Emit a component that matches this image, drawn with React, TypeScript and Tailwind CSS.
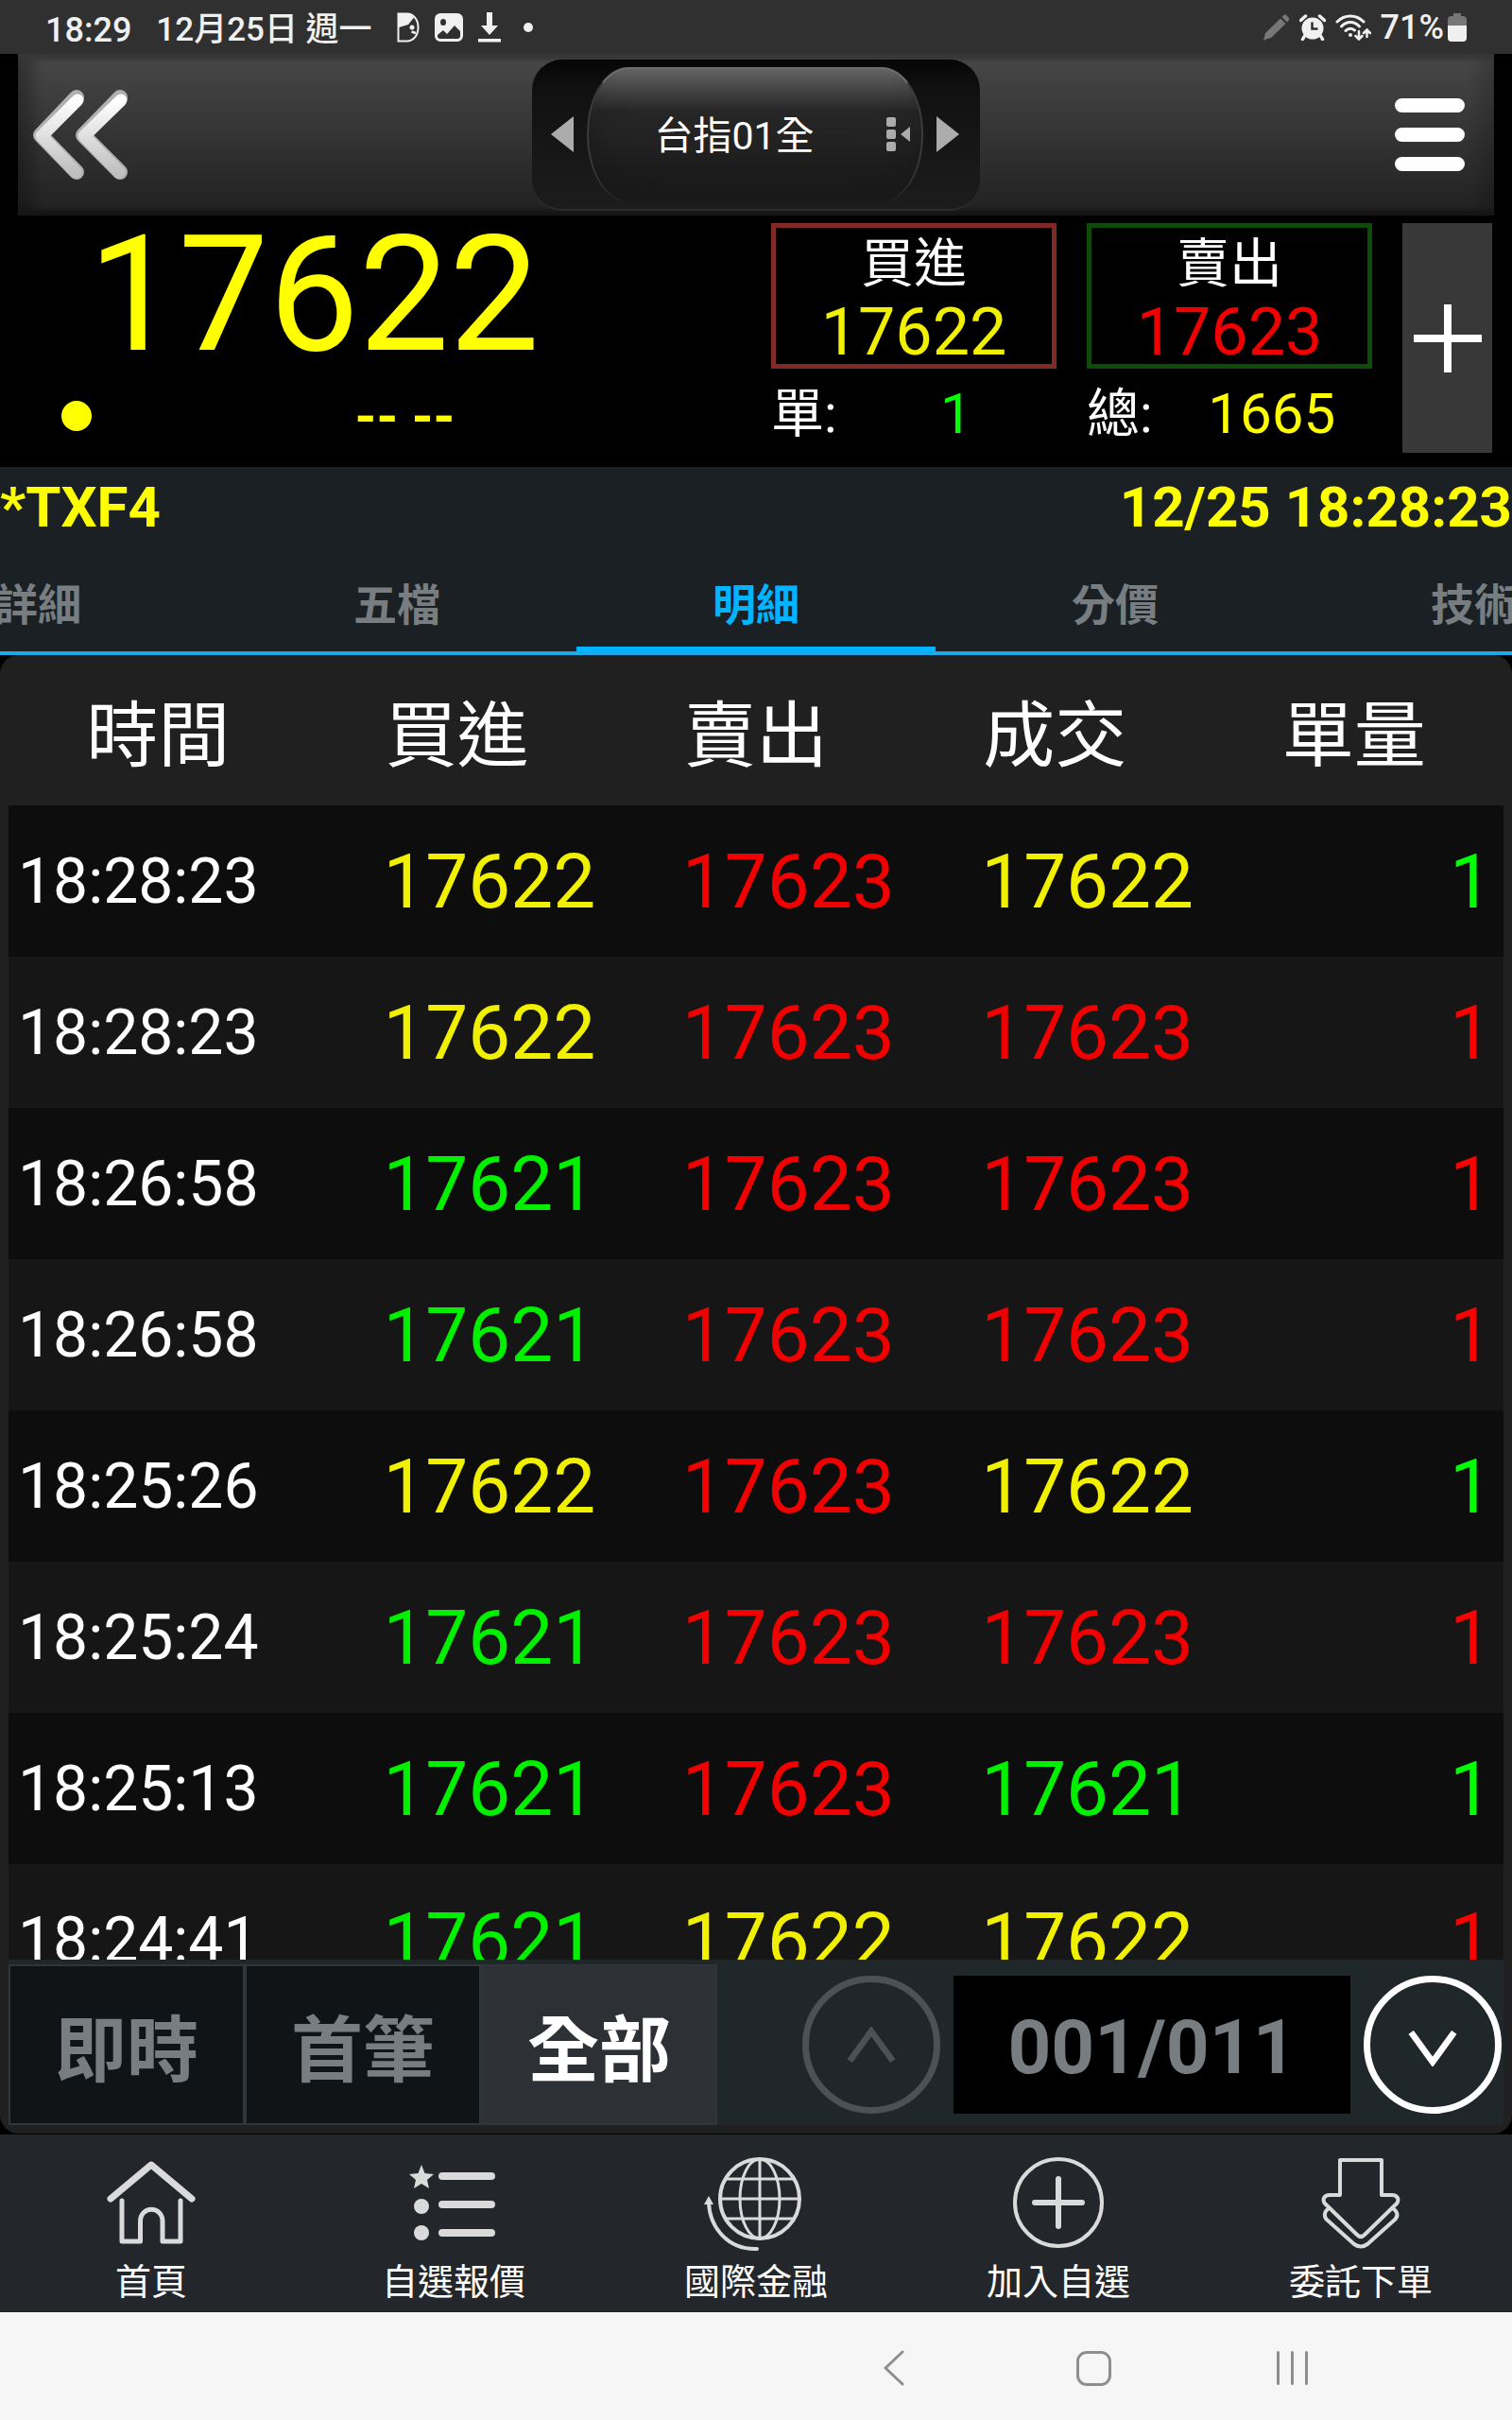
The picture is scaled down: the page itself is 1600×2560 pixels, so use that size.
import React from 'react';
import clsx from 'clsx';

type Tone = 'up' | 'down' | 'flat';

interface Tick {
  time: string;
  bid: [string, Tone];
  ask: [string, Tone];
  deal: [string, Tone];
  volume: [string, Tone];
}

const PRICE_TONE: Record<Tone, string> = {
  up: 'text-[#f00000]',
  down: 'text-[#00f000]',
  flat: 'text-[#f0f000]',
};

const VOLUME_TONE: Record<Tone, string> = {
  up: 'text-[#ff0000]',
  down: 'text-[#00ff00]',
  flat: 'text-[#ffff00]',
};

const TICKS: Tick[] = [
  { time: '18:28:23', bid: ['17622', 'flat'], ask: ['17623', 'up'], deal: ['17622', 'flat'], volume: ['1', 'down'] },
  { time: '18:28:23', bid: ['17622', 'flat'], ask: ['17623', 'up'], deal: ['17623', 'up'], volume: ['1', 'up'] },
  { time: '18:26:58', bid: ['17621', 'down'], ask: ['17623', 'up'], deal: ['17623', 'up'], volume: ['1', 'up'] },
  { time: '18:26:58', bid: ['17621', 'down'], ask: ['17623', 'up'], deal: ['17623', 'up'], volume: ['1', 'up'] },
  { time: '18:25:26', bid: ['17622', 'flat'], ask: ['17623', 'up'], deal: ['17622', 'flat'], volume: ['1', 'down'] },
  { time: '18:25:24', bid: ['17621', 'down'], ask: ['17623', 'up'], deal: ['17623', 'up'], volume: ['1', 'up'] },
  { time: '18:25:13', bid: ['17621', 'down'], ask: ['17623', 'up'], deal: ['17621', 'down'], volume: ['1', 'down'] },
  { time: '18:24:41', bid: ['17621', 'down'], ask: ['17622', 'flat'], deal: ['17622', 'flat'], volume: ['1', 'up'] },
];

const TABS = ['詳細', '五檔', '明細', '分價', '技術'];
const COLUMNS = ['時間', '買進', '賣出', '成交', '單量'];
const FILTERS = ['即時', '首筆', '全部'];

const StatusBar: React.FC = () => (
  <div className="flex h-[57px] shrink-0 items-center justify-between bg-[#303030] px-12 text-[#f0f0f0]">
    <div className="flex items-center">
      <span className="pt-1.5 text-[36px] leading-[48px] font-medium">18:29</span>
      <span className="ml-[26px] pt-1.5 text-[35px] leading-[48px] font-medium">12月25日 週一</span>
      <svg className="ml-[26px] h-8 w-6" viewBox="0 0 24 32">
        <path d="M1.500 1.500h9c7 0 12 6 12 14.500s-5 14.500-12 14.500h-9z" fill="none" stroke="#f0f0f0" strokeWidth="2" />
        <path d="M1 1h11c3 .500 5 2 6.500 4L12 13 2 16z" fill="#f0f0f0" />
        <circle cx="16" cy="16" r="2.500" fill="#f0f0f0" />
        <path d="M15.500 20.500l4.500 1.500" fill="none" stroke="#f0f0f0" strokeWidth="2.500" />
      </svg>
      <svg className="ml-4 h-[30px] w-[30px]" viewBox="0 0 30 30">
        <path
          fillRule="evenodd"
          fill="#f0f0f0"
          d="M6 0h18a6 6 0 0 1 6 6v18a6 6 0 0 1-6 6H6a6 6 0 0 1-6-6V6a6 6 0 0 1 6-6zM9 6a3 3.500 0 1 0 0 7 3 3.500 0 1 0 0-7zM3 23v1a3 3 0 0 0 3 3h18a3 3 0 0 0 3-3v-5l-6-6-8 9-4-4z"
        />
      </svg>
      <svg className="ml-4 h-8 w-6" viewBox="0 0 24 32">
        <path d="M9 0h6v14h6l-9 10-9-10h6zM0 28h24v3.500H0z" fill="#f0f0f0" />
      </svg>
      <span className="ml-6 h-[10px] w-[10px] rounded-full bg-[#f0f0f0]" />
    </div>
    <div className="flex items-center">
      <svg className="h-7 w-7" viewBox="0 0 28 28" fill="#777777">
        <path d="M0 28l2-8L18 4.500l5.500 5.500L8 25l-5 1.500zM19.500 3L22 .500c1-1 5 3 5.500 5L25 8.500z" />
      </svg>
      <svg className="ml-[10px] h-7 w-7" viewBox="0 0 28 28">
        <circle cx="14" cy="15" r="11.500" fill="#f0f0f0" />
        <path d="M1.500 6.500l5-4.500M26.500 6.500l-5-4.500M5.500 23l-2 3.500M22.500 23l2 3.500" stroke="#f0f0f0" strokeWidth="3.500" strokeLinecap="round" />
        <path d="M13.500 8.500v7h6" fill="none" stroke="#303030" strokeWidth="2.500" />
      </svg>
      <svg className="ml-[10px] h-7 w-[38px]" viewBox="0 0 38 28" fill="none" stroke="#f0f0f0" strokeWidth="3" strokeLinecap="round">
        <path d="M2 8c8-8 20-8 28 0M6.500 13c5.500-6 13.500-6 19 0M11 17.500c3-3 6-3 9.500-.500" />
        <circle cx="16" cy="22" r="2" fill="#f0f0f0" stroke="none" />
        <path d="M25 18v8M21.500 23l3.500 3.500 3.500-3.500M33.500 24v-7M30 20l3.500-3.500L37 20" strokeWidth="2.500" />
      </svg>
      <span className="ml-[10px] text-[36px] leading-[48px] font-medium">71%</span>
      <svg className="ml-1 h-[30px] w-5" viewBox="0 0 20 30">
        <path d="M6 0h8v3h2a4 4 0 0 1 4 4v7H0V7a4 4 0 0 1 4-4h2z" fill="#777777" />
        <path d="M0 13h20v13a4 4 0 0 1-4 4H4a4 4 0 0 1-4-4z" fill="#f0f0f0" />
      </svg>
    </div>
  </div>
);

const Header: React.FC = () => (
  <header className="mx-[19px] grid h-[171px] shrink-0 grid-cols-[1fr_auto_1fr] items-center bg-linear-to-b from-[#484848] to-[#212121] shadow-[inset_0_8px_4px_-2px_#363636,inset_0_-8px_4px_-2px_#161616,inset_24px_0_14px_-8px_rgba(0,0,0,0.25),inset_-24px_0_14px_-8px_rgba(0,0,0,0.15)]">
    <button className="ml-[13px] justify-self-start" aria-label="返回">
      <svg className="h-[100px] w-[104px]" viewBox="0 0 104 100" fill="none" strokeLinecap="round" strokeLinejoin="round">
        <defs>
          <linearGradient id="steel" x1="0" y1="0" x2="0" y2="1">
            <stop offset="0" stopColor="#ffffff" />
            <stop offset="1" stopColor="#c0c0c0" />
          </linearGradient>
        </defs>
        <path d="M49 10L11 50l38 39M95 10L56 50l39 39" stroke="#b0b0b0" strokeWidth="16" />
        <path d="M50 13L12 51l36 38M96 13L57 51l37 38" stroke="url(#steel)" strokeWidth="13" />
      </svg>
    </button>

    <div className="flex h-[160px] w-[474px] items-center justify-between rounded-[32px] border-b-2 border-[#2c2c2c] bg-linear-to-b from-[#060606] via-[#111111] via-20% to-[#1c1c1c] pr-[22px] pl-5">
      <button aria-label="上一檔">
        <svg className="h-[38px] w-6" viewBox="0 0 24 38">
          <path d="M24 0v38L0 19z" fill="#acacac" />
        </svg>
      </button>
      <button className="relative flex h-[142px] w-[356px] items-center justify-center rounded-[44px/70px] border-x-2 border-t-2 border-[#3a3a3a] border-t-[#6c6c6c] bg-linear-to-b from-[#646464] via-[#262626] via-32% to-[#212121] pt-0.5 pr-11 text-[41px] leading-[56px] text-white shadow-[inset_0_-60px_40px_-20px_#191919]">
        台指01全
        <svg className="absolute top-[51px] right-3 h-[36px] w-[25px]" viewBox="0 0 25 36" fill="#acacac">
          <rect width="10" height="10" rx="2" />
          <rect y="13" width="10" height="10" rx="2" />
          <rect y="26" width="10" height="10" rx="2" />
          <path d="M25 10v16l-10-8z" />
        </svg>
      </button>
      <button aria-label="下一檔">
        <svg className="h-[38px] w-6" viewBox="0 0 24 38">
          <path d="M0 0v38l24-19z" fill="#acacac" />
        </svg>
      </button>
    </div>

    <button className="mr-[31px] flex flex-col gap-4 justify-self-end" aria-label="選單">
      <span className="h-[15px] w-[74px] rounded-full bg-white" />
      <span className="h-[15px] w-[74px] rounded-full bg-white" />
      <span className="h-[15px] w-[74px] rounded-full bg-white" />
    </button>
  </header>
);

const QuotePanel: React.FC = () => (
  <section className="flex shrink-0 gap-8 bg-black pt-2 pr-[21px] pb-[15px]">
    <div className="flex flex-1 flex-col pr-6">
      <div className="pr-24 text-center text-[170px] leading-[152px] text-[#ffff00]">17622</div>
      <div className="flex flex-1 items-center pt-3 pl-[65px] text-[#ffff00]">
        <span className="h-8 w-8 rounded-full bg-[#ffff00]" />
        <span className="flex-1 text-center text-[58px] leading-[60px] font-bold">-- --</span>
      </div>
    </div>

    <div className="w-[302px]">
      <button className="flex h-[154px] w-full flex-col items-center border-[5px] border-[#7f2a27] pt-0.5">
        <span className="text-[56px] leading-[72px] text-white">買進</span>
        <span className="text-[70px] leading-[72px] text-[#f0f000]">17622</span>
      </button>
      <div className="flex h-[89px] items-center pt-1.5">
        <span className="text-[56px] leading-[60px] text-white">單:</span>
        <span className="flex-1 pl-5 text-center text-[60px] leading-[60px] text-[#00ff00]">1</span>
      </div>
    </div>

    <div className="w-[302px]">
      <button className="flex h-[154px] w-full flex-col items-center border-[5px] border-[#0e4b0a] pt-0.5">
        <span className="text-[56px] leading-[72px] text-white">賣出</span>
        <span className="text-[70px] leading-[72px] text-[#f00000]">17623</span>
      </button>
      <div className="flex h-[89px] items-center pt-1.5">
        <span className="text-[56px] leading-[60px] text-white">總:</span>
        <span className="flex-1 pl-5 text-center text-[60px] leading-[60px] text-[#ffff00]">1665</span>
      </div>
    </div>

    <button className="flex h-[243px] w-[95px] items-center justify-center bg-[#383838]" aria-label="展開">
      <svg className="h-[72px] w-[72px]" viewBox="0 0 72 72" stroke="#ffffff" strokeWidth="8">
        <path d="M36 0v72M0 36h72" />
      </svg>
    </button>
  </section>
);

const Tabs: React.FC = () => (
  <nav className="flex h-[114px] justify-center overflow-hidden border-b-4 border-[#1ba9ea]">
    {TABS.map((tab) => (
      <button
        key={tab}
        className={clsx(
          'w-[380px] shrink-0 border-b-[5px] pt-4 text-[46px] leading-[60px] font-bold',
          tab === '明細' ? 'border-[#00b4ff] text-[#00b4ff]' : 'border-transparent text-[#777d80]',
        )}
      >
        {tab}
      </button>
    ))}
  </nav>
);

const TickTable: React.FC = () => (
  <div className="min-h-0 flex-1 overflow-hidden">
    <table className="w-full table-fixed border-collapse">
      <thead>
        <tr className="h-[159px]">
          {COLUMNS.map((column) => (
            <th key={column} className="pt-3 text-center text-[76px] leading-[90px] font-normal text-white">
              {column}
            </th>
          ))}
        </tr>
      </thead>
      <tbody className="text-[80px] leading-[90px]">
        {TICKS.map((tick, index) => (
          <tr key={index} className="h-[160px] odd:bg-[#0d0d0d] even:bg-[#161616]">
            <td className="pt-0.5 pl-[10px] text-[66px] text-white">{tick.time}</td>
            <td className={clsx('pt-0.5 pl-20', PRICE_TONE[tick.bid[1]])}>{tick.bid[0]}</td>
            <td className={clsx('pt-0.5 pl-20', PRICE_TONE[tick.ask[1]])}>{tick.ask[0]}</td>
            <td className={clsx('pt-0.5 pl-20', PRICE_TONE[tick.deal[1]])}>{tick.deal[0]}</td>
            <td className={clsx('pt-0.5 pr-3 text-right', VOLUME_TONE[tick.volume[1]])}>{tick.volume[0]}</td>
          </tr>
        ))}
      </tbody>
    </table>
  </div>
);

const Pager: React.FC = () => (
  <div className="flex h-[175px] shrink-0 items-center bg-[#20272a] pr-0.5">
    <div className="flex h-[170px] self-end">
      {FILTERS.map((filter) => (
        <button
          key={filter}
          className={clsx(
            'w-[250px] border-2 border-[#303539] pt-3.5 text-[76px] leading-[90px] font-bold',
            filter === '全部' ? 'bg-[#2d3135] text-white' : 'bg-[#101416] text-[#777d80]',
          )}
        >
          {filter}
        </button>
      ))}
    </div>
    <div className="flex flex-1 items-center justify-end gap-[14px] pt-1">
      <button className="flex h-[146px] w-[146px] items-center justify-center rounded-full border-[7px] border-[#4c5154]" aria-label="上一頁" disabled>
        <svg className="h-[38px] w-[52px]" viewBox="0 0 54 40" fill="none" stroke="#4c5154" strokeWidth="7">
          <path d="M3 38L27 5l24 33" />
        </svg>
      </button>
      <div className="flex h-[146px] w-[420px] items-center justify-center bg-black pt-1.5 text-[80px] leading-[90px] font-bold text-[#777d80]">
        001/011
      </div>
      <button className="flex h-[146px] w-[146px] items-center justify-center rounded-full border-[7px] border-white pt-2" aria-label="下一頁">
        <svg className="h-[38px] w-[52px]" viewBox="0 0 54 40" fill="none" stroke="#ffffff" strokeWidth="7">
          <path d="M3 2l24 33L51 2" />
        </svg>
      </button>
    </div>
  </div>
);

const NAV_ITEMS: { label: string; icon: React.ReactNode }[] = [
  {
    label: '首頁',
    icon: (
      <>
        <path d="M7 46L50 10l43 36" strokeWidth="7" />
        <path d="M19 48v43h19.500V70c0-17 23.500-17 23.500 0v21h19V48" strokeWidth="5" />
      </>
    ),
  },
  {
    label: '自選報價',
    icon: (
      <>
        <path d="M16 10l3.500 9 9.500 1-7 6 2 9-8-5-8 5 2-9-7-6 9.500-1z" fill="#dadada" stroke="none" />
        <circle cx="16" cy="54" r="8" fill="#dadada" stroke="none" />
        <circle cx="16" cy="82" r="8" fill="#dadada" stroke="none" />
        <path d="M38 22h52M38 52h52M38 82h52" strokeWidth="8" />
      </>
    ),
  },
  {
    label: '國際金融',
    icon: (
      <>
        <circle cx="54" cy="46" r="42" />
        <ellipse cx="54" cy="46" rx="21" ry="42" strokeWidth="3" />
        <path d="M54 4v84M18 25h72M12 46h84M18 67h72" strokeWidth="3" />
        <path d="M0 50c1 26 20 50 51 49" />
        <path d="M0 43l5 9H-5z" fill="#dadada" stroke="none" />
      </>
    ),
  },
  {
    label: '加入自選',
    icon: (
      <>
        <circle cx="50" cy="50" r="46" strokeWidth="4" />
        <path d="M50 25v50M25 50h50" strokeWidth="6" />
      </>
    ),
  },
  {
    label: '委託下單',
    icon: (
      <>
        <path d="M28 5h44v37h11c6 0 8 5 5 9L54 84q-4 4-8 0L12 51c-3-4-1-9 5-9h11z" />
        <path d="M15 57c-4 3-4 8-1 11l29 26q7 5 14 0l29-26c4-4 3-8-2-12" />
      </>
    ),
  },
];

const BottomNav: React.FC = () => (
  <nav className="flex h-[188px] shrink-0 bg-[#23272b]">
    {NAV_ITEMS.map((item) => (
      <a key={item.label} href="#" className="flex flex-1 flex-col items-center pt-[22px] text-[38px] leading-[48px] text-white">
        <svg
          className="mb-[10px] h-[100px] w-[100px] overflow-visible"
          viewBox="0 0 100 100"
          fill="none"
          stroke="#dadada"
          strokeWidth="4"
          strokeLinecap="round"
          strokeLinejoin="round"
        >
          {item.icon}
        </svg>
        {item.label}
      </a>
    ))}
  </nav>
);

const SystemNav: React.FC = () => (
  <div className="flex h-[114px] shrink-0 items-center justify-end gap-[175px] bg-[#f6f6f6] pt-1 pr-[216px]">
    <button aria-label="Back">
      <svg className="h-[38px] w-[36px]" viewBox="0 0 36 38" fill="none" stroke="#8e8e8e" strokeWidth="3" strokeLinecap="round" strokeLinejoin="round">
        <path d="M27 2L9 19l18 17" />
      </svg>
    </button>
    <button className="h-[37px] w-[37px] rounded-[11px] border-3 border-[#8e8e8e]" aria-label="Home" />
    <button className="flex gap-3" aria-label="Recents">
      <span className="h-9 w-[3px] rounded-full bg-[#8e8e8e]" />
      <span className="h-9 w-[3px] rounded-full bg-[#8e8e8e]" />
      <span className="h-9 w-[3px] rounded-full bg-[#8e8e8e]" />
    </button>
  </div>
);

export default function App() {
  return (
    <div className="flex h-screen flex-col overflow-hidden bg-black font-[Roboto,'Noto_Sans_CJK_TC',sans-serif]">
      <StatusBar />
      <Header />
      <QuotePanel />
      <div className="shrink-0 bg-[#1a2023]">
        <div className="flex h-[85px] items-center justify-between text-[60px] leading-[72px] font-bold text-[#ffff00]">
          <span>*TXF4</span>
          <span>12/25 18:28:23</span>
        </div>
        <Tabs />
      </div>
      <main className="mb-px flex min-h-0 flex-1 flex-col overflow-hidden rounded-[20px] bg-[#202020] px-[9px] pb-[9px]">
        <TickTable />
        <Pager />
      </main>
      <BottomNav />
      <SystemNav />
    </div>
  );
}
